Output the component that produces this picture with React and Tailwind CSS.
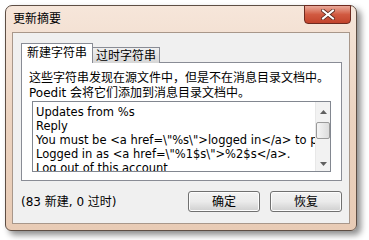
import React from 'react';

const cjk = { fontFamily: '"DejaVu Sans", "Noto Sans CJK SC", sans-serif' };

const lines = [
  'Updates from %s',
  'Reply',
  'You must be <a href=\\"%s\\">logged in</a> to post a comment.',
  'Logged in as <a href=\\"%1$s\\">%2$s</a>.',
  'Log out of this account',
];

const Button = ({ children }) => (
  <button className="w-[72px] h-[21px] rounded-[3px] border border-[#707070] bg-gradient-to-b from-[#f2f2f2] via-[#ebebeb] to-[#cfcfcf] text-[12px] leading-none text-black shadow-[inset_0_0_0_1px_#fcfcfc]">
    {children}
  </button>
);

const App = () => {
  return (
    <div className="w-[369px] h-[240px] bg-white overflow-hidden pl-[5px] pt-[5px]" style={cjk}>
      {/* dialog window */}
      <div className="w-[352px] h-[226px] flex flex-col rounded-t-[7px] rounded-b-[6px] border border-[#5e4e44] bg-gradient-to-b from-[#f6e6da] via-[#ecd3c0] to-[#e8cbb5] shadow-[4px_4px_6px_rgba(0,0,0,0.45)]">
        {/* title bar */}
        <div className="h-[26px] flex items-start justify-between pl-[7px] pr-[5px]">
          <span className="mt-[6px] text-[12px] leading-[14px] text-black">更新摘要</span>
          <div className="w-[47px] h-[19px] -mt-px rounded-b-[4px] border border-[#6e2a1f] bg-gradient-to-b from-[#e9a99a] via-[#d15a41] to-[#c2432b] flex items-center justify-center">
            <svg width="14" height="11" viewBox="0 0 14 11">
              <path d="M2 1.5 L12 9.5 M12 1.5 L2 9.5" stroke="#5b2a20" strokeWidth="3.6" strokeLinecap="square" />
              <path d="M2 1.5 L12 9.5 M12 1.5 L2 9.5" stroke="#ffffff" strokeWidth="2" strokeLinecap="square" />
            </svg>
          </div>
        </div>

        {/* client area */}
        <div className="flex-1 mx-[6px] mb-[6px] border border-[#a8978a] bg-[#f0f0f0] flex flex-col">
          <div className="mt-[10px] ml-[8px] w-[321px]">
            {/* tabs */}
            <div className="flex items-end h-[20px] relative z-10">
              <div className="h-[20px] px-[5px] border border-b-0 border-[#898c95] bg-white text-[12px] leading-[19px] text-black">
                新建字符串
              </div>
              <div className="h-[16px] px-[3px] border border-l-0 border-b-0 border-[#898c95] bg-gradient-to-b from-[#f0f0f0] to-[#d6d6d6] text-[12px] leading-[16px] text-black">
                过时字符串
              </div>
            </div>
            {/* tab panel */}
            <div className="-mt-px h-[119px] border border-[#898c95] bg-white px-[7px] pt-[8px]">
              <p className="text-[12px] leading-[15px] text-black whitespace-nowrap">
                这些字符串发现在源文件中，但是不在消息目录文档中。
                <br />
                Poedit 会将它们添加到消息目录文档中。
              </p>
              {/* list box */}
              <div className="ml-[3px] w-[299px] h-[71px] border border-[#828790] bg-white flex overflow-hidden">
                <div className="flex-1 overflow-hidden pl-[3px] pt-[3px]">
                  {lines.map((l) => (
                    <div key={l} className="text-[11.5px] leading-[14px] text-black whitespace-nowrap">
                      {l}
                    </div>
                  ))}
                </div>
                {/* scrollbar */}
                <div className="w-[15px] bg-[#f2f2f2] border-l border-[#e8e8e8] flex flex-col items-center">
                  <div className="h-[20px] flex items-center justify-center">
                    <svg width="7" height="4" viewBox="0 0 7 4"><path d="M0 4 L3.5 0 L7 4 Z" fill="#606060" /></svg>
                  </div>
                  <div className="w-[14px] h-[17px] rounded-[2px] border border-[#9a9a9a] bg-gradient-to-r from-[#f5f5f5] to-[#dcdcdc]" />
                  <div className="flex-1" />
                  <div className="h-[15px] flex items-center justify-center">
                    <svg width="7" height="4" viewBox="0 0 7 4"><path d="M0 0 L3.5 4 L7 0 Z" fill="#606060" /></svg>
                  </div>
                </div>
              </div>
            </div>
          </div>

          {/* footer */}
          <div className="flex items-center mt-[10px] pl-[8px] pr-[7px]">
            <span className="flex-1 text-[12px] leading-[14px] text-black">(83 新建, 0 过时)</span>
            <div className="flex gap-[10px]">
              <Button>确定</Button>
              <Button>恢复</Button>
            </div>
          </div>
        </div>
      </div>
    </div>
  );
};

export default App;
